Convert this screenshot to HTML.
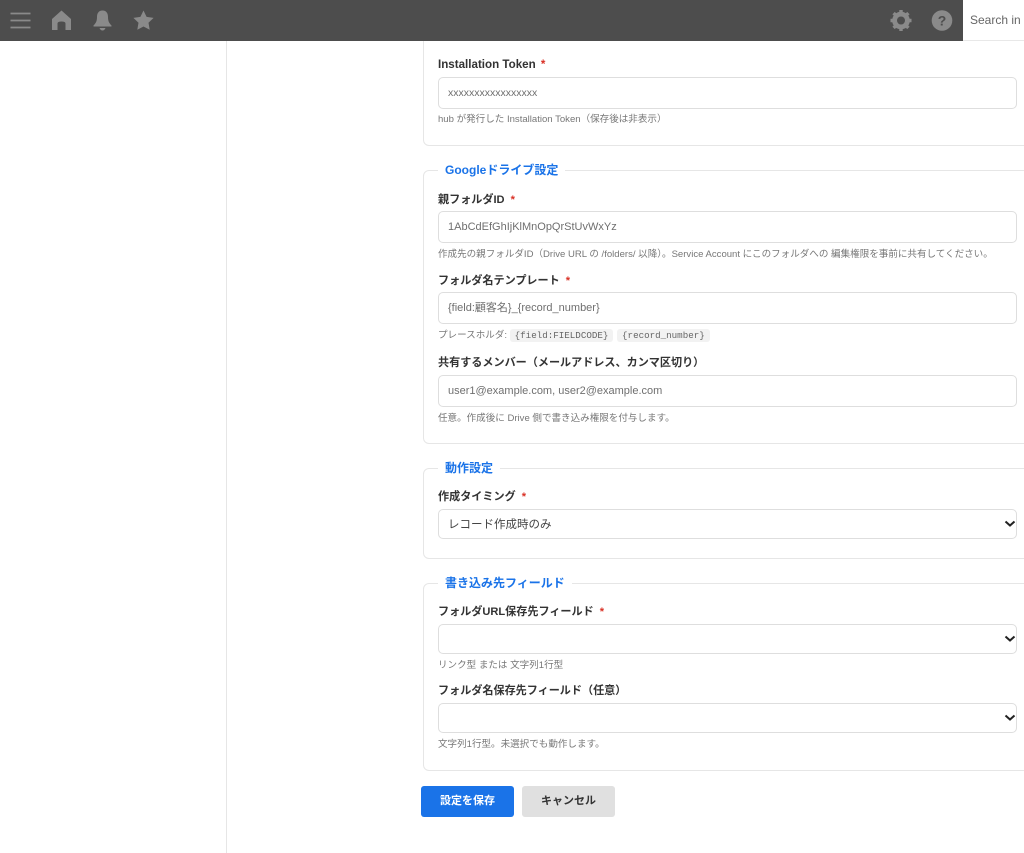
<!DOCTYPE html>
<html lang="ja">
<head>
<meta charset="utf-8">
<title>設定</title>
<style>
html,body{margin:0;padding:0;background:#fff;}
body{width:1024px;height:853px;position:relative;overflow:hidden;font-family:"Liberation Sans","Noto Sans CJK JP",sans-serif;color:#333;}
.a{position:absolute;white-space:nowrap;}
.hdr{position:absolute;left:0;top:0;width:1024px;height:41px;background:#4d4d4d;z-index:5;}
.search{position:absolute;left:963px;top:0;width:61px;height:41px;box-sizing:border-box;border-bottom:1px solid #e8e8e8;background:#fff;font-size:12px;line-height:41px;color:#666;text-indent:7px;overflow:hidden;white-space:nowrap;}
.vline{position:absolute;left:226px;top:41px;width:1px;height:812px;background:#e6e6e6;}
.fs{position:absolute;left:423px;width:640px;border:1px solid #e6e6e6;border-radius:6px;box-sizing:border-box;}
.lg{position:absolute;left:438px;height:16px;padding:0 7px;background:#fff;color:#1a73e8;font-size:12px;font-weight:700;line-height:16px;white-space:nowrap;}
.lb{position:absolute;left:438px;font-size:11.1px;font-weight:700;color:#333;line-height:14px;white-space:nowrap;}
.lb i{font-style:normal;color:#d93025;margin-left:3px;}
.in{position:absolute;left:438px;width:579px;height:32px;box-sizing:border-box;border:1px solid #dedede;border-radius:5px;background:#fff;font-size:11px;line-height:30px;padding-left:9px;color:#6f6f6f;white-space:nowrap;}
.sel{color:#444;height:30px;line-height:30px;font-size:11.5px;}
.sel svg{position:absolute;right:0;top:10px;}
.h{position:absolute;left:438px;font-size:9.55px;line-height:12px;color:#777;white-space:nowrap;}
code{font-family:"Liberation Mono","Noto Sans CJK JP",monospace;font-size:9.2px;background:#f2f2f2;border-radius:3px;padding:1px 5px;color:#666;margin-right:1px;}
.btn{position:absolute;top:786px;width:93px;height:31px;border-radius:3px;text-align:center;line-height:31px;font-size:11px;font-weight:700;}
</style>
</head>
<body>
<div class="hdr">
<svg class="a" style="left:0;top:0" width="170" height="41" viewBox="0 0 170 41">
<g stroke="#8a8a8a" stroke-width="1.700" fill="none"><path d="M10.500 13.500H30.500M10.500 20.500H30.500M10.500 27.500H30.500"/></g>
<path fill="#8a8a8a" d="M61.500 10.500 L71 19 V30 H65.500 V23.500 Q65.500 21.500 61.500 21.500 Q57.500 21.500 57.500 23.500 V30 H52 V19 Z"/>
<path fill="#8a8a8a" d="M102.500 10.500 C106.500 10.500 108 13.500 108 17 C108 21 109 23 111.500 25.500 V26.500 H93.500 V25.500 C96 23 97 21 97 17 C97 13.500 98.500 10.500 102.500 10.500 Z M99.500 28 H105.500 Q104.500 30.500 102.500 30.500 Q100.500 30.500 99.500 28 Z"/>
<path fill="#8a8a8a" d="M143.500 10.500 L146.600 16.900 L153.600 17.900 L148.500 22.800 L149.700 29.800 L143.500 26.500 L137.300 29.800 L138.500 22.800 L133.400 17.900 L140.400 16.900 Z"/>
</svg>
<svg class="a" style="left:880px;top:0" width="80" height="41" viewBox="880 0 80 41">
<circle cx="901" cy="20.500" r="6.700" fill="none" stroke="#8a8a8a" stroke-width="4.200"/>
<g stroke="#8a8a8a" stroke-width="3.400"><path d="M901 10V31M890.500 20.500H911.500M893.600 13.100L908.400 27.900M908.400 13.100L893.600 27.900"/></g>
<circle cx="901" cy="20.500" r="4" fill="#4d4d4d"/>
<circle cx="942" cy="20.500" r="10.300" fill="#8a8a8a"/>
<text x="942" y="25.500" text-anchor="middle" font-family="Liberation Sans" font-size="14" font-weight="700" fill="#4d4d4d">?</text>
</svg>
<div class="search">Search in</div>
</div>
<div class="vline"></div>

<div class="fs" style="top:20px;height:126px"></div>
<div class="lb" style="top:58px;font-size:11.6px">Installation Token <i style="margin-left:2px">*</i></div>
<div class="in" style="top:77px;font-size:10.5px">xxxxxxxxxxxxxxxxx</div>
<div class="h" style="top:114px">hub が発行した Installation Token（保存後は非表示）</div>

<div class="fs" style="top:170px;height:274px"></div>
<div class="lg" style="top:162px">Googleドライブ設定</div>
<div class="lb" style="top:193px">親フォルダID <i>*</i></div>
<div class="in" style="top:211px">1AbCdEfGhIjKlMnOpQrStUvWxYz</div>
<div class="h" style="top:249px">作成先の親フォルダID（Drive URL の /folders/ 以降）。Service Account にこのフォルダへの 編集権限を事前に共有してください。</div>
<div class="lb" style="top:274px">フォルダ名テンプレート <i>*</i></div>
<div class="in" style="top:292px">{field:顧客名}_{record_number}</div>
<div class="h" style="top:330px">プレースホルダ: <code>{field:FIELDCODE}</code> <code>{record_number}</code></div>
<div class="lb" style="top:356px">共有するメンバー（メールアドレス、カンマ区切り）</div>
<div class="in" style="top:375px">user1@example.com, user2@example.com</div>
<div class="h" style="top:413px">任意。作成後に Drive 側で書き込み権限を付与します。</div>

<div class="fs" style="top:468px;height:91px"></div>
<div class="lg" style="top:460px">動作設定</div>
<div class="lb" style="top:490px">作成タイミング <i>*</i></div>
<div class="in sel" style="top:509px">レコード作成時のみ<svg width="12" height="8" viewBox="0 0 12 8"><path d="M1.500 1.500 L6 5.500 L10.500 1.500" fill="none" stroke="#222" stroke-width="2"/></svg></div>

<div class="fs" style="top:583px;height:188px"></div>
<div class="lg" style="top:575px">書き込み先フィールド</div>
<div class="lb" style="top:605px">フォルダURL保存先フィールド <i>*</i></div>
<div class="in sel" style="top:624px"><svg width="12" height="8" viewBox="0 0 12 8"><path d="M1.500 1.500 L6 5.500 L10.500 1.500" fill="none" stroke="#222" stroke-width="2"/></svg></div>
<div class="h" style="top:660px">リンク型 または 文字列1行型</div>
<div class="lb" style="top:684px">フォルダ名保存先フィールド（任意）</div>
<div class="in sel" style="top:703px"><svg width="12" height="8" viewBox="0 0 12 8"><path d="M1.500 1.500 L6 5.500 L10.500 1.500" fill="none" stroke="#222" stroke-width="2"/></svg></div>
<div class="h" style="top:739px">文字列1行型。未選択でも動作します。</div>

<div class="btn" style="left:421px;background:#1a73e8;color:#fff">設定を保存</div>
<div class="btn" style="left:522px;background:#e0e0e0;color:#333">キャンセル</div>
</body>
</html>
